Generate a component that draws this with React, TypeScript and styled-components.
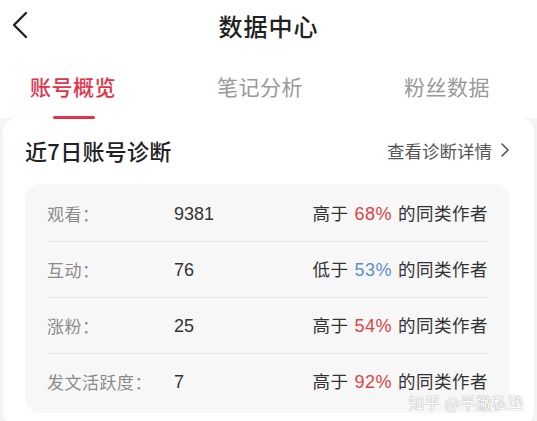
import styled, { createGlobalStyle } from "styled-components";

const GlobalStyle = createGlobalStyle`
  html, body {
    margin: 0;
    padding: 0;
    background: #f4f4f4;
  }
  body {
    font-family: "Noto Sans CJK SC", "Noto Sans", sans-serif;
    -webkit-font-smoothing: antialiased;
  }
`;

const Screen = styled.div`
  width: 537px;
  height: 421px;
  overflow: hidden;
  position: relative;
  background: #f4f4f4;
`;

const TopBar = styled.div`
  height: 50px;
  background: #fff;
  display: grid;
  grid-template-columns: 50px 1fr 50px;
  align-items: center;
`;

const BackButton = styled.div`
  display: flex;
  align-items: center;
  padding-left: 10px;
  height: 50px;
`;

const Title = styled.div`
  text-align: center;
  font-size: 24px;
  font-weight: 500;
  color: #222;
  letter-spacing: 1px;
`;

const TabBar = styled.div`
  height: 68px;
  background: #fff;
  display: flex;
  justify-content: space-between;
  align-items: center;
  padding: 0 47px 0 30px;
`;

const Tab = styled.div<{ $active?: boolean }>`
  position: relative;
  font-size: 21px;
  letter-spacing: 0.5px;
  color: ${(p) => (p.$active ? "#e2334b" : "#999")};
  font-weight: ${(p) => (p.$active ? 500 : 400)};
  padding-top: 4px;

  &::after {
    content: "";
    display: ${(p) => (p.$active ? "block" : "none")};
    position: absolute;
    left: 50%;
    bottom: -18px;
    width: 42px;
    height: 3px;
    margin-left: -20px;
    border-radius: 2px;
    background: #e2334b;
  }
`;

const Body = styled.div`
  padding: 0 3px;
`;

const Card = styled.div`
  background: #fff;
  border-radius: 14px;
  padding: 0 24px 12px 22px;
`;

const CardHeader = styled.div`
  height: 66px;
  display: flex;
  align-items: center;
  justify-content: space-between;
`;

const CardTitle = styled.div`
  font-size: 22px;
  font-weight: 500;
  color: #222;
  letter-spacing: 0.3px;
  padding-bottom: 3px;
`;

const DetailLink = styled.div`
  display: flex;
  align-items: center;
  gap: 8px;
  font-size: 17.5px;
  color: #555;
  padding-bottom: 2px;
`;

const StatBox = styled.div`
  background: #f7f7f7;
  border-radius: 16px;
  padding: 2px 22px 4px;
`;

const StatRow = styled.div<{ $last?: boolean }>`
  height: 55px;
  display: grid;
  grid-template-columns: 127px 1fr auto;
  align-items: center;
  border-bottom: ${(p) => (p.$last ? "none" : "1px solid #e6e6e6")};
  font-size: 17px;
  line-height: 22px;
`;

const Label = styled.div`
  color: #8c8c8c;
  letter-spacing: 0.5px;
`;

const Value = styled.div`
  color: #333;
  font-family: "Liberation Sans", "Noto Sans", sans-serif;
  font-size: 18px;
`;

const Compare = styled.div`
  color: #333;
  font-size: 17.5px;
  letter-spacing: 0.5px;
`;

const Percent = styled.span<{ $tone: "up" | "down" }>`
  font-family: "Liberation Sans", "Noto Sans", sans-serif;
  font-size: 18px;
  color: ${(p) => (p.$tone === "up" ? "#d9463f" : "#5b8fd0")};
  margin: 0 6px;
`;

const Watermark = styled.div`
  position: absolute;
  right: 13px;
  bottom: 11px;
  font-size: 15.5px;
  line-height: 16px;
  color: #fff;
  letter-spacing: 0.5px;
  text-shadow: 0 0 1px #a8a8a8, 0 0 1px #a8a8a8;
`;

const stats = [
  { label: "观看：", value: "9381", dir: "高于", pct: "68%", tone: "up" as const },
  { label: "互动：", value: "76", dir: "低于", pct: "53%", tone: "down" as const },
  { label: "涨粉：", value: "25", dir: "高于", pct: "54%", tone: "up" as const },
  { label: "发文活跃度：", value: "7", dir: "高于", pct: "92%", tone: "up" as const },
];

export default function App() {
  return (
    <>
      <GlobalStyle />
      <Screen>
        <TopBar>
          <BackButton>
            <svg width="20" height="28" viewBox="0 0 20 28">
              <polyline
                points="16,2 4,14 16,26"
                fill="none"
                stroke="#222"
                strokeWidth="2.4"
                strokeLinecap="round"
                strokeLinejoin="round"
              />
            </svg>
          </BackButton>
          <Title>数据中心</Title>
          <div />
        </TopBar>
        <TabBar>
          <Tab $active>账号概览</Tab>
          <Tab>笔记分析</Tab>
          <Tab>粉丝数据</Tab>
        </TabBar>
        <Body>
          <Card>
            <CardHeader>
              <CardTitle>近7日账号诊断</CardTitle>
              <DetailLink>
                查看诊断详情
                <svg width="10" height="16" viewBox="0 0 10 16">
                  <polyline
                    points="2,2 8,8 2,14"
                    fill="none"
                    stroke="#555"
                    strokeWidth="1.6"
                    strokeLinecap="round"
                    strokeLinejoin="round"
                  />
                </svg>
              </DetailLink>
            </CardHeader>
            <StatBox>
              {stats.map((s, i) => (
                <StatRow key={s.label} $last={i === stats.length - 1}>
                  <Label>{s.label}</Label>
                  <Value>{s.value}</Value>
                  <Compare>
                    {s.dir}
                    <Percent $tone={s.tone}>{s.pct}</Percent>
                    的同类作者
                  </Compare>
                </StatRow>
              ))}
            </StatBox>
          </Card>
        </Body>
        <Watermark>知乎 @半撇私塾</Watermark>
      </Screen>
    </>
  );
}
